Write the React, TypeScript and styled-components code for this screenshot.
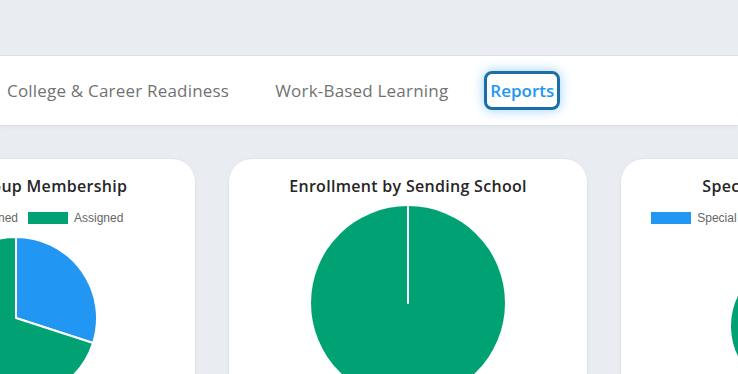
import { FC } from "react"
import styled, { createGlobalStyle } from "styled-components"

const GlobalStyle = createGlobalStyle`
  html, body {
    margin: 0;
    padding: 0;
    background: #e9edf2;
    overflow: hidden;
  }
  body {
    font-family: "Open Sans", "Liberation Sans", sans-serif;
  }
`

const Page = styled.div`
  width: 738px;
  height: 374px;
  padding-top: 55px;
  box-sizing: border-box;
  overflow: hidden;
`

const NavBar = styled.nav`
  height: 71px;
  background: #ffffff;
  border-top: 1px solid #dde2e8;
  border-bottom: 1px solid #dde2e8;
  box-shadow: 0 2px 4px rgba(0, 0, 0, 0.03);
  display: flex;
  align-items: center;
  gap: 46px;
  padding-left: 7px;
  padding-bottom: 1px;
  box-sizing: border-box;
`

const NavItem = styled.div<{ $active?: boolean }>`
  font-size: 17px;
  letter-spacing: 0.2px;
  font-weight: ${(p) => (p.$active ? 600 : 500)};
  white-space: nowrap;
  color: ${(p) => (p.$active ? "#2196f3" : "#727272")};
  ${(p) =>
    p.$active &&
    `
    margin-left: -10px;
    padding: 5px 3px;
    letter-spacing: 0;
    border: 3px solid #1b6fa6;
    border-radius: 8px;
    box-shadow: 0 0 12px rgba(33, 150, 243, 0.45);
  `}
`

const CardRow = styled.div`
  display: flex;
  gap: 32px;
  margin-top: 32px;
  margin-left: -164px;
`

const Card = styled.section`
  flex: 0 0 360px;
  height: 260px;
  background: #ffffff;
  border: 1px solid #e1e5ea;
  border-radius: 24px;
  box-sizing: border-box;
  display: flex;
  flex-direction: column;
  align-items: center;
  padding-top: 15px;
  box-shadow: 0 1px 3px rgba(0, 0, 0, 0.03);
`

const CardTitle = styled.h3`
  margin: 0;
  font-size: 16px;
  letter-spacing: 0.3px;
  font-weight: 600;
  color: #262626;
  line-height: 24px;
  white-space: nowrap;
`

const Legend = styled.div`
  display: flex;
  flex-wrap: wrap;
  justify-content: center;
  column-gap: 10px;
  row-gap: 8px;
  width: 320px;
  margin-top: 13px;
`

const LegendItem = styled.div`
  display: flex;
  align-items: center;
  gap: 6px;
  font-family: "Liberation Sans", Arial, sans-serif;
  font-size: 12px;
  color: #666666;
  white-space: nowrap;
`

const Swatch = styled.span<{ $color: string }>`
  width: 40px;
  height: 12px;
  background: ${(p) => p.$color};
`

const ChartArea = styled.div<{ $top: number }>`
  margin-top: ${(p) => p.$top}px;
`

interface Slice {
  label: string
  value: number
  color: string
}

const polar = (cx: number, cy: number, r: number, deg: number) => {
  const a = ((deg - 90) * Math.PI) / 180
  return [cx + r * Math.cos(a), cy + r * Math.sin(a)]
}

const Pie: FC<{ slices: Slice[]; radius: number }> = ({ slices, radius }) => {
  const size = radius * 2 + 4
  const c = size / 2
  const total = slices.reduce((acc, s) => acc + s.value, 0)
  let start = 0
  return (
    <svg width={size} height={size} viewBox={`0 0 ${size} ${size}`}>
      {slices.map((s, i) => {
        const sweep = (s.value / total) * 360
        const end = start + sweep
        let el
        if (sweep >= 359.99) {
          el = (
            <g key={i}>
              <circle cx={c} cy={c} r={radius} fill={s.color} />
              <line
                x1={c}
                y1={c}
                x2={c}
                y2={c - radius}
                stroke="#fff"
                strokeWidth={2}
                strokeLinecap="round"
              />
            </g>
          )
        } else if (sweep > 0) {
          const [x1, y1] = polar(c, c, radius, start)
          const [x2, y2] = polar(c, c, radius, end)
          const large = sweep > 180 ? 1 : 0
          el = (
            <path
              key={i}
              d={`M${c},${c} L${x1},${y1} A${radius},${radius} 0 ${large} 1 ${x2},${y2} Z`}
              fill={s.color}
              stroke="#fff"
              strokeWidth={2}
              strokeLinejoin="round"
            />
          )
        }
        start = end
        return el
      })}
    </svg>
  )
}

const BLUE = "#2196f3"
const GREEN = "#00a274"
const RED = "#f4511e"

const membership: Slice[] = [
  { label: "Unassigned", value: 30, color: BLUE },
  { label: "Assigned", value: 70, color: GREEN },
]

const schools: Slice[] = [{ label: "Home School", value: 1, color: GREEN }]

const special: Slice[] = [
  { label: "Special Education", value: 0.4, color: RED },
  { label: "General Education", value: 99.6, color: GREEN },
]

const specialLegend: Slice[] = [
  { label: "Special Education", value: 0, color: BLUE },
  { label: "General Education", value: 0, color: GREEN },
  { label: "504 Plan", value: 0, color: RED },
]

const ChartLegend: FC<{ slices: Slice[] }> = ({ slices }) => (
  <Legend>
    {slices.map((s) => (
      <LegendItem key={s.label}>
        <Swatch $color={s.color} />
        {s.label}
      </LegendItem>
    ))}
  </Legend>
)

const App: FC = () => {
  return (
    <Page>
      <GlobalStyle />
      <NavBar>
        <NavItem>College &amp; Career Readiness</NavItem>
        <NavItem>Work-Based Learning</NavItem>
        <NavItem $active>Reports</NavItem>
      </NavBar>
      <CardRow>
        <Card>
          <CardTitle>Student Group Membership</CardTitle>
          <ChartLegend slices={membership} />
          <ChartArea $top={10}>
            <Pie slices={membership} radius={81} />
          </ChartArea>
        </Card>
        <Card>
          <CardTitle>Enrollment by Sending School</CardTitle>
          <ChartArea $top={6}>
            <Pie slices={schools} radius={97} />
          </ChartArea>
        </Card>
        <Card>
          <CardTitle>Special Education Status</CardTitle>
          <ChartLegend slices={specialLegend} />
          <ChartArea $top={7}>
            <Pie slices={special} radius={70} />
          </ChartArea>
        </Card>
      </CardRow>
    </Page>
  )
}

export default App
